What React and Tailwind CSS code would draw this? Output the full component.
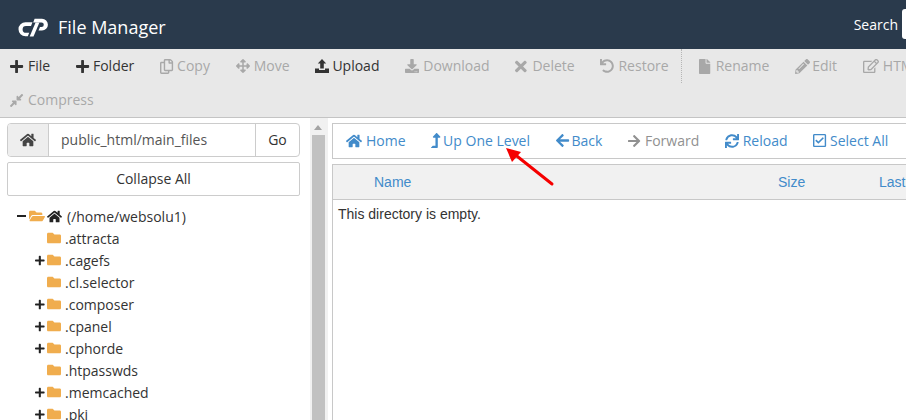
import React from "react";
import {
  FaPlus, FaRegCopy, FaArrowsAlt, FaDownload, FaTimes, FaUndo, FaFile, FaPencilAlt, FaRegEdit,
  FaCompressAlt, FaHome, FaFolder, FaFolderOpen, FaArrowLeft, FaArrowRight, FaSync, FaRegCheckSquare,
  FaLevelUpAlt,
} from "react-icons/fa";

const Logo = () => (
  <svg width="30" height="19" viewBox="0 0 30 19" fill="white">
    <path d="M7.5 4.3H14.5L13 8H8a3.4 3.4 0 0 0 0 6.8h3.2L9.8 18.3H7.5a7 7 0 0 1 0-14z" />
    <path d="M16.6.8H24a5.9 5.9 0 0 1 0 11.8H20.5L22 9h1.5a2.3 2.3 0 0 0 0-4.6H15.2z" />
    <path d="M17.6 4.4h3.8L15.5 18.5h-3.8z" />
  </svg>
);

const UploadIcon = ({ size }) => (
  <svg width={size} height={size + 1} viewBox="0 0 14 15" fill="currentColor">
    <path d="M7 0 11.2 4.4H8.8V9.6H5.2V4.4H2.8z" />
    <path d="M0 9.5h4v1.4h6V9.5h4V14H0z" />
  </svg>
);

const Tool = ({ icon: Icon, label, on, size = 14, w = "w-[17px]", mr = "mr-[25.8px]" }) => (
  <span className={`flex items-center ${mr} shrink-0 ${on ? "text-[#333333]" : "text-[#a8a8a8]"}`}>
    <span className={`${w} flex items-center shrink-0`}><Icon size={size} preserveAspectRatio="xMinYMid" /></span>
    <span>{label}</span>
  </span>
);

const Nav = ({ icon: Icon, label, dim, size = 15, w }) => (
  <span className={`flex items-center mr-[25.5px] shrink-0 ${dim ? "text-[#919191]" : "text-[#428bca]"}`}>
    <span className={`${w} flex items-center shrink-0`}><Icon size={size} preserveAspectRatio="xMinYMid" /></span>
    <span>{label}</span>
  </span>
);

const folders = [
  [".attracta", false],
  [".cagefs", true],
  [".cl.selector", false],
  [".composer", true],
  [".cpanel", true],
  [".cphorde", true],
  [".htpasswds", false],
  [".memcached", true],
  [".pki", true],
];

const Row = ({ name, plus }) => (
  <div className="h-[22px] flex items-center shrink-0">
    <span className="w-[10px] mr-[2px] flex text-[#222222]">
      {plus && <FaPlus size={11} preserveAspectRatio="xMinYMid" />}
    </span>
    <FaFolder size={14} className="text-[#f0ad4e] mr-[4px]" />
    <span>{name}</span>
  </div>
);

export default function App() {
  return (
    <div className="relative w-[906px] h-[420px] overflow-hidden bg-white text-[14px] text-[#333333] font-['Open_Sans',sans-serif]">
      <header className="h-[49px] bg-[#2a3a4c] flex items-center justify-between text-white">
        <div className="flex items-center pl-[18px] pt-[6px]">
          <Logo />
          <span className="ml-[10px] text-[18px]">File Manager</span>
        </div>
        <div className="flex items-center -mt-[1px]">
          <span className="mr-[4px]">Search</span>
          <span className="w-[4px] h-[30px] bg-white rounded-l-[3px]" />
        </div>
      </header>

      <section className="h-[69px] bg-[#e8e8e8] border-b border-[#c4c4c4] pl-[10px] leading-[20px]">
        <div className="h-[34px] flex items-center whitespace-nowrap">
          <Tool icon={FaPlus} label="File" on size={15} w="w-[18px]" />
          <Tool icon={FaPlus} label="Folder" on size={15} />
          <Tool icon={FaRegCopy} label="Copy" size={15} />
          <Tool icon={FaArrowsAlt} label="Move" w="w-[18px]" />
          <Tool icon={UploadIcon} label="Upload" on />
          <Tool icon={FaDownload} label="Download" w="w-[18px]" />
          <Tool icon={FaTimes} label="Delete" size={17} />
          <Tool icon={FaUndo} label="Restore" w="w-[18px]" mr="mr-[12px]" />
          <span className="w-0 h-[34px] border-l border-dotted border-[#b5b5b5] mr-[17px] shrink-0" />
          <Tool icon={FaFile} label="Rename" size={15} />
          <Tool icon={FaPencilAlt} label="Edit" size={15} />
          <Tool icon={FaRegEdit} label="HTML Editor" size={16} w="w-[20px]" />
        </div>
        <div className="h-[34px] flex items-center">
          <Tool icon={FaCompressAlt} label="Compress" size={15} w="w-[18px]" />
        </div>
      </section>

      <main className="flex h-[302px]">
        <aside className="w-[310px] shrink-0 pl-[7px] pr-[10px] pt-[5px] flex flex-col">
          <div className="h-[34px] flex border border-[#cccccc] rounded-[4px] overflow-hidden shrink-0">
            <span className="w-[41px] bg-[#eeeeee] border-r border-[#cccccc] flex items-center justify-center text-[#444444]">
              <FaHome size={16} />
            </span>
            <span className="flex-1 pl-[12px] pb-[1px] flex items-center text-[#555555]">public_html/main_files</span>
            <span className="w-[44px] pb-[1px] border-l border-[#cccccc] flex items-center justify-center">Go</span>
          </div>
          <div className="h-[34px] mt-[5px] pb-[1px] border border-[#cccccc] rounded-[2px] flex items-center justify-center shrink-0">
            Collapse All
          </div>
          <div className="mt-[9px] pl-[10px] flex flex-col">
            <div className="h-[22px] flex items-center shrink-0">
              <span className="w-[9px] h-[2px] bg-[#222222] mr-[3px]" />
              <FaFolderOpen size={16} className="text-[#f0ad4e] mr-[2px]" />
              <FaHome size={15} className="text-[#222222] mr-[5px]" />
              <span>(/home/websolu1)</span>
            </div>
            <div className="pl-[18px] flex flex-col">
              {folders.map(([n, p]) => <Row key={n} name={n} plus={p} />)}
            </div>
          </div>
        </aside>

        <div className="w-[18px] shrink-0 bg-[#f1f1f1] flex flex-col pl-[2px] pt-[7px] mr-[4px]">
          <span className="w-0 h-0 ml-[2px] border-x-[4px] border-x-transparent border-b-[5px] border-b-[#a3a3a3]" />
          <span className="w-[13px] flex-1 mt-[5px] bg-[#c1c1c1]" />
        </div>

        <div className="flex-1 min-w-0 pt-[5px]">
          <div className="h-[36px] pb-[1px] border border-r-0 border-[#c8c8c8] flex items-center pl-[13px] whitespace-nowrap">
            <Nav icon={FaHome} label="Home" size={16} w="w-[20px]" />
            <Nav icon={FaLevelUpAlt} label="Up One Level" size={15} w="w-[12px]" />
            <Nav icon={FaArrowLeft} label="Back" size={15} w="w-[16px]" />
            <Nav icon={FaArrowRight} label="Forward" dim size={14} w="w-[17px]" />
            <Nav icon={FaSync} label="Reload" size={14} w="w-[18px]" />
            <Nav icon={FaRegCheckSquare} label="Select All" size={15} w="w-[17px]" />
          </div>
          <div className="mt-[5px] h-[36px] bg-[#f1f1f1] border-y border-l border-[#c8c8c8] flex items-center text-[#428bca] font-['Liberation_Sans',sans-serif]">
            <span className="ml-[41px] w-[404px]">Name</span>
            <span className="w-[101px]">Size</span>
            <span>Last</span>
          </div>
          <div className="h-[220px] border-l border-[#c8c8c8] pl-[5px] pt-[4px] font-['Liberation_Sans',sans-serif] text-[#333333]">
            This directory is empty.
          </div>
        </div>
      </main>

      <svg className="absolute left-[500px] top-[143px]" width="60" height="50" viewBox="0 0 60 50">
        <path d="M52 41 13 10" stroke="#f50000" strokeWidth="3" strokeLinecap="round" />
        <path d="M6 5 21 9 12 19z" fill="#f50000" />
      </svg>
    </div>
  );
}
